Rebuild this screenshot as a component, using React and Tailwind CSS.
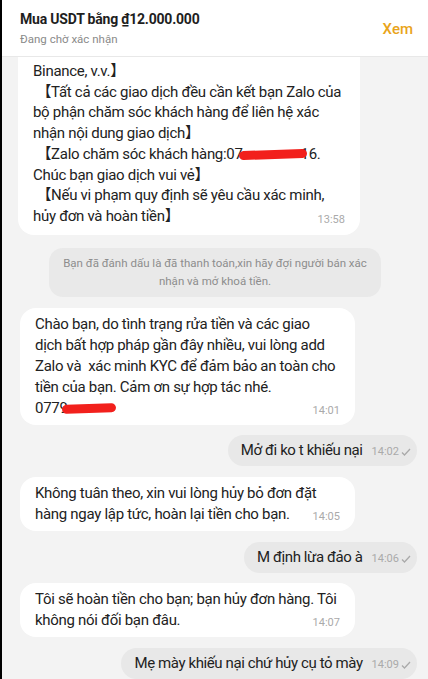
const font = { fontFamily: '"Roboto", "Noto Sans", "Noto Sans CJK SC", sans-serif' };

function Redact({ w, ml = 0 }) {
  return (
    <span
      className="relative inline-block align-middle h-[9px] bg-[#f2201c] rounded-full -rotate-2"
      style={{ width: w, marginLeft: ml }}
    />
  );
}

function Time({ t, check }) {
  return (
    <span className="shrink-0 text-[11px] text-[#aaaaaa] tracking-normal flex items-center gap-[2px] leading-none">
      {t}
      {check && (
        <svg width="10" height="8" viewBox="0 0 10 8" fill="none">
          <path d="M1 4.5 L3.5 7 L9 1" stroke="#aaaaaa" strokeWidth="1.3" />
        </svg>
      )}
    </span>
  );
}

function Incoming({ lines, time, className = '' }) {
  return (
    <div className={`ml-[18px] w-[335px] bg-white rounded-2xl px-[15px] py-[6px] text-[15px] tracking-[-0.3px] leading-[21px] text-[#222] ${className}`}>
      {lines.slice(0, -1).map((l, i) => (
        <div key={i} className="whitespace-pre">{l}</div>
      ))}
      <div className="flex justify-between items-end">
        <span className="whitespace-pre">{lines[lines.length - 1]}</span>
        <span className="mb-[3px] ml-2"><Time t={time} /></span>
      </div>
    </div>
  );
}

function Outgoing({ text, time, className = '' }) {
  return (
    <div className={`flex justify-end pr-[11px] ${className}`}>
      <div className="h-[31px] bg-[#e8e8e8] rounded-2xl pl-[13px] pr-[6px] flex items-center text-[15px] tracking-[-0.4px] text-[#222]">
        {text}
        <span className="ml-[9px] mt-[3px]"><Time t={time} check /></span>
      </div>
    </div>
  );
}

export default function App() {
  return (
    <div className="w-[428px] h-[679px] overflow-hidden bg-[#f3f3f3] border-l-2 border-black flex flex-col" style={font}>
      <div className="h-[57px] shrink-0 bg-white flex items-center justify-between pl-[18px] pr-[15px] border-b border-[#e8e8e8]">
        <div>
          <div className="text-[14px] font-bold tracking-[-0.2px] text-[#1e1e1e] leading-[20px]">Mua USDT bằng ₫12.000.000</div>
          <div className="text-[11.5px] text-[#8a8a8a] leading-[18px] mt-[1px]">Đang chờ xác nhận</div>
        </div>
        <div className="text-[15px] font-medium text-[#e9a41a] mt-[2px]">Xem</div>
      </div>

      <div className="flex-1 flex flex-col">
        <div className="ml-[16px] w-[342px] bg-white rounded-b-2xl px-[15px] pt-[4px] pb-[8px] text-[15px] tracking-[-0.3px] leading-[20.7px] text-[#222]">
          <div>Binance, v.v.】</div>
          <div className="whitespace-pre">{' 【Tất cả các giao dịch đều cần kết bạn Zalo của'}</div>
          <div>bộ phận chăm sóc khách hàng để liên hệ xác</div>
          <div>nhận nội dung giao dịch】</div>
          <div className="whitespace-pre">
            {' 【Zalo chăm sóc khách hàng:07'}
            <Redact w={68} ml={-4} />
            <span className="-ml-[6px]">16.</span>
          </div>
          <div>Chúc bạn giao dịch vui vẻ】</div>
          <div className="whitespace-pre">{' 【Nếu vi phạm quy định sẽ yêu cầu xác minh,'}</div>
          <div className="flex justify-between items-end">
            <span>hủy đơn và hoàn tiền】</span>
            <span className="mb-[2px]"><Time t="13:58" /></span>
          </div>
        </div>

        <div className="mx-auto mt-[13px] w-[332px] h-[49px] bg-[#e9e9e9] rounded-[14px] flex flex-col items-center justify-center text-[11.5px] leading-[18px] text-[#8d8d8d]">
          <div>Bạn đã đánh dấu là đã thanh toán,xin hãy đợi người bán xác</div>
          <div>nhận và mở khoá tiền.</div>
        </div>

        <Incoming
          className="mt-[11px]"
          time="14:01"
          lines={[
            'Chào bạn, do tình trạng rửa tiền và các giao',
            'dịch bất hợp pháp gần đây nhiều, vui lòng add',
            'Zalo và  xác minh KYC để đảm bảo an toàn cho',
            'tiền của bạn. Cảm ơn sự hợp tác nhé.',
            <span key="p">
              0779
              <Redact w={54} ml={-6} />
            </span>,
          ]}
        />

        <Outgoing className="mt-[10px]" text="Mở đi ko t khiếu nại" time="14:02" />

        <Incoming
          className="mt-[11px]"
          time="14:05"
          lines={[
            'Không tuân theo, xin vui lòng hủy bỏ đơn đặt',
            'hàng ngay lập tức, hoàn lại tiền cho bạn.',
          ]}
        />

        <Outgoing className="mt-[11px]" text="M định lừa đảo à" time="14:06" />

        <Incoming
          className="mt-[10px]"
          time="14:07"
          lines={[
            'Tôi sẽ hoàn tiền cho bạn; bạn hủy đơn hàng. Tôi',
            'không nói đối bạn đâu.',
          ]}
        />

        <Outgoing className="mt-[11px]" text="Mẹ mày khiếu nại chứ hủy cụ tỏ mày" time="14:09" />
      </div>
    </div>
  );
}
